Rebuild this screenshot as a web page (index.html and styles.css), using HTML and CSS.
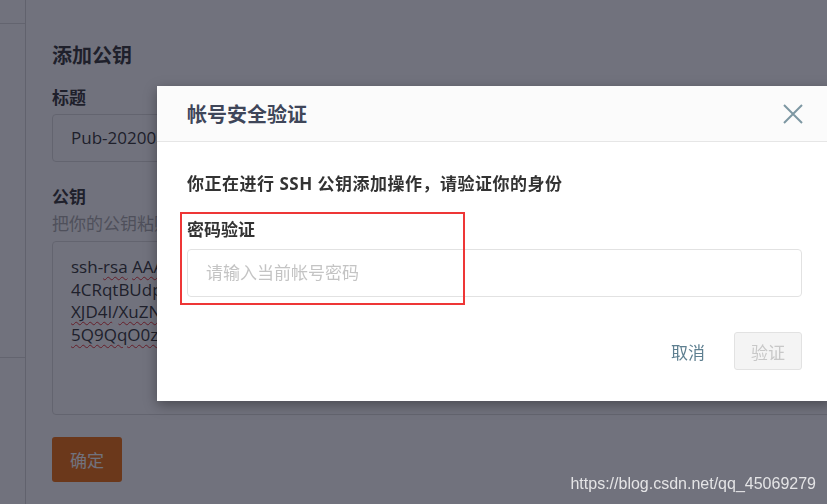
FILE: index.html
```html
<!DOCTYPE html>
<html lang="zh-CN">
<head>
<meta charset="utf-8">
<title>添加公钥</title>
<link rel="stylesheet" href="styles.css">
</head>
<body>
<div class="page">
  <aside class="sidebar">
    <div class="side-top"></div>
    <div class="side-mid"></div>
  </aside>
  <main class="main">
    <h2 class="page-title">添加公钥</h2>
    <label class="field-label">标题</label>
    <div class="text-input">Pub-2020051</div>
    <label class="field-label key-label">公钥</label>
    <p class="hint">把你的公钥粘贴</p>
    <div class="key-area">
      <div class="key-line">ssh-<span class="typo">rsa</span> <span class="typo">AAAAB</span></div>
      <div class="key-line">4CRqtBUdpL</div>
      <div class="key-line"><span class="typo">XJD4I</span>/<span class="typo">XuZNm</span></div>
      <div class="key-line"><span class="typo">5Q9QqO0zV</span></div>
    </div>
    <button class="confirm-btn">确定</button>
  </main>
</div>
<div class="mask"></div>
<div class="watermark">https://blog.csdn.net/qq_45069279</div>
<div class="modal">
  <div class="modal-header">
    <span class="modal-title">帐号安全验证</span>
    <svg class="close-icon" width="20" height="20" viewBox="0 0 20 20" aria-hidden="true">
      <path d="M1 1 L19 19 M19 1 L1 19" stroke="#7d97a2" stroke-width="2" fill="none"/>
    </svg>
  </div>
  <div class="modal-body">
    <p class="notice">你正在进行 SSH 公钥添加操作，请验证你的身份</p>
    <label class="pw-label">密码验证</label>
    <div class="pw-input">请输入当前帐号密码</div>
  </div>
  <div class="modal-footer">
    <button class="cancel-btn">取消</button>
    <button class="verify-btn">验证</button>
  </div>
  <div class="highlight"></div>
</div>
</body>
</html>
```
FILE: styles.css
```css
html, body {
  margin: 0;
  padding: 0;
  width: 827px;
  height: 504px;
  overflow: hidden;
  background: #fff;
  font-family: "Open Sans", "Noto Sans CJK SC", sans-serif;
  color: #333;
}

.page {
  display: flex;
  height: 504px;
}

.sidebar {
  width: 25px;
  flex: none;
  border-right: 1px solid #d6d6d6;
}

.side-top {
  height: 23px;
  border-bottom: 1px solid #dcdcdc;
}

.side-mid {
  height: 333px;
  border-bottom: 1px solid #dcdcdc;
}

.main {
  flex: none;
  width: 900px;
  padding: 42px 0 0 26px;
  display: flex;
  flex-direction: column;
  align-items: flex-start;
}

.page-title {
  margin: 0;
  font-size: 20px;
  line-height: 28px;
  font-weight: 700;
  color: #333;
}

.field-label {
  margin-top: 16px;
  font-size: 17px;
  line-height: 24px;
  font-weight: 700;
  color: #333;
}

.text-input {
  margin-top: 4px;
  box-sizing: border-box;
  width: 800px;
  height: 48px;
  border: 1px solid #dcdcdc;
  border-radius: 4px;
  padding: 0 18px;
  font-size: 17px;
  line-height: 46px;
  color: #333;
}

.key-label {
  margin-top: 23px;
}

.hint {
  margin: 3px 0 0;
  font-size: 17px;
  line-height: 24px;
  color: #aaa;
  white-space: nowrap;
}

.key-area {
  margin-top: 5px;
  box-sizing: border-box;
  width: 800px;
  height: 174px;
  border: 1px solid #dcdcdc;
  border-radius: 4px;
  padding: 14px 18px;
  font-size: 17px;
  line-height: 22.5px;
  color: #333;
}

.key-line {
  white-space: nowrap;
}

.typo {
  text-decoration: underline wavy #e53030;
  text-decoration-thickness: 1px;
  text-underline-offset: 3px;
}

.confirm-btn {
  margin-top: 22px;
  width: 70px;
  height: 45px;
  border: none;
  border-radius: 3px;
  background: #f06e0a;
  color: #fff;
  font-family: "Open Sans", "Noto Sans CJK SC", sans-serif;
  font-size: 17px;
  padding: 0;
}

.mask {
  position: fixed;
  inset: 0;
  background: rgba(18, 20, 38, 0.6);
}

.watermark {
  position: fixed;
  right: 11px;
  top: 474px;
  font-family: "Liberation Sans", Arial, sans-serif;
  font-size: 16px;
  line-height: 20px;
  color: #e4e4e6;
}

.modal {
  position: absolute;
  left: 157px;
  top: 86px;
  width: 675px;
  background: #fff;
  box-shadow: 0 4px 12px rgba(0, 0, 0, 0.35);
}

.modal-header {
  box-sizing: border-box;
  height: 56px;
  padding: 0 29px 0 30px;
  display: flex;
  align-items: center;
  justify-content: space-between;
  background: #fbfbfb;
  border-bottom: 1px solid #e6e6e6;
}

.modal-title {
  font-size: 20px;
  font-weight: 700;
  color: #3f4659;
}

.close-icon {
  display: block;
}

.modal-body {
  padding: 30px 30px 0;
  display: flex;
  flex-direction: column;
}

.notice {
  margin: 0;
  font-size: 17px;
  line-height: 24px;
  font-weight: 700;
  letter-spacing: 0.5px;
  color: #333;
}

.pw-label {
  margin-top: 22px;
  font-size: 17px;
  line-height: 24px;
  font-weight: 700;
  color: #333;
}

.pw-input {
  margin-top: 7px;
  box-sizing: border-box;
  height: 48px;
  border: 1px solid #e2e2e2;
  border-radius: 4px;
  padding: 0 18px;
  font-size: 17px;
  line-height: 46px;
  color: #c4c4c4;
}

.modal-footer {
  padding: 35px 30px 31px;
  display: flex;
  justify-content: flex-end;
  align-items: center;
  gap: 29px;
}

.cancel-btn {
  border: none;
  background: none;
  padding: 0;
  font-family: "Open Sans", "Noto Sans CJK SC", sans-serif;
  font-size: 17px;
  color: #5e7f90;
}

.verify-btn {
  box-sizing: border-box;
  width: 68px;
  height: 38px;
  border: 1px solid #e2e2e2;
  border-radius: 3px;
  background: #f4f4f4;
  color: #c8c8c8;
  font-family: "Open Sans", "Noto Sans CJK SC", sans-serif;
  font-size: 17px;
  padding: 0;
}

.highlight {
  position: absolute;
  left: 23px;
  top: 126px;
  width: 285px;
  height: 93px;
  border: 2px solid #ee3636;
  box-sizing: border-box;
}
```
